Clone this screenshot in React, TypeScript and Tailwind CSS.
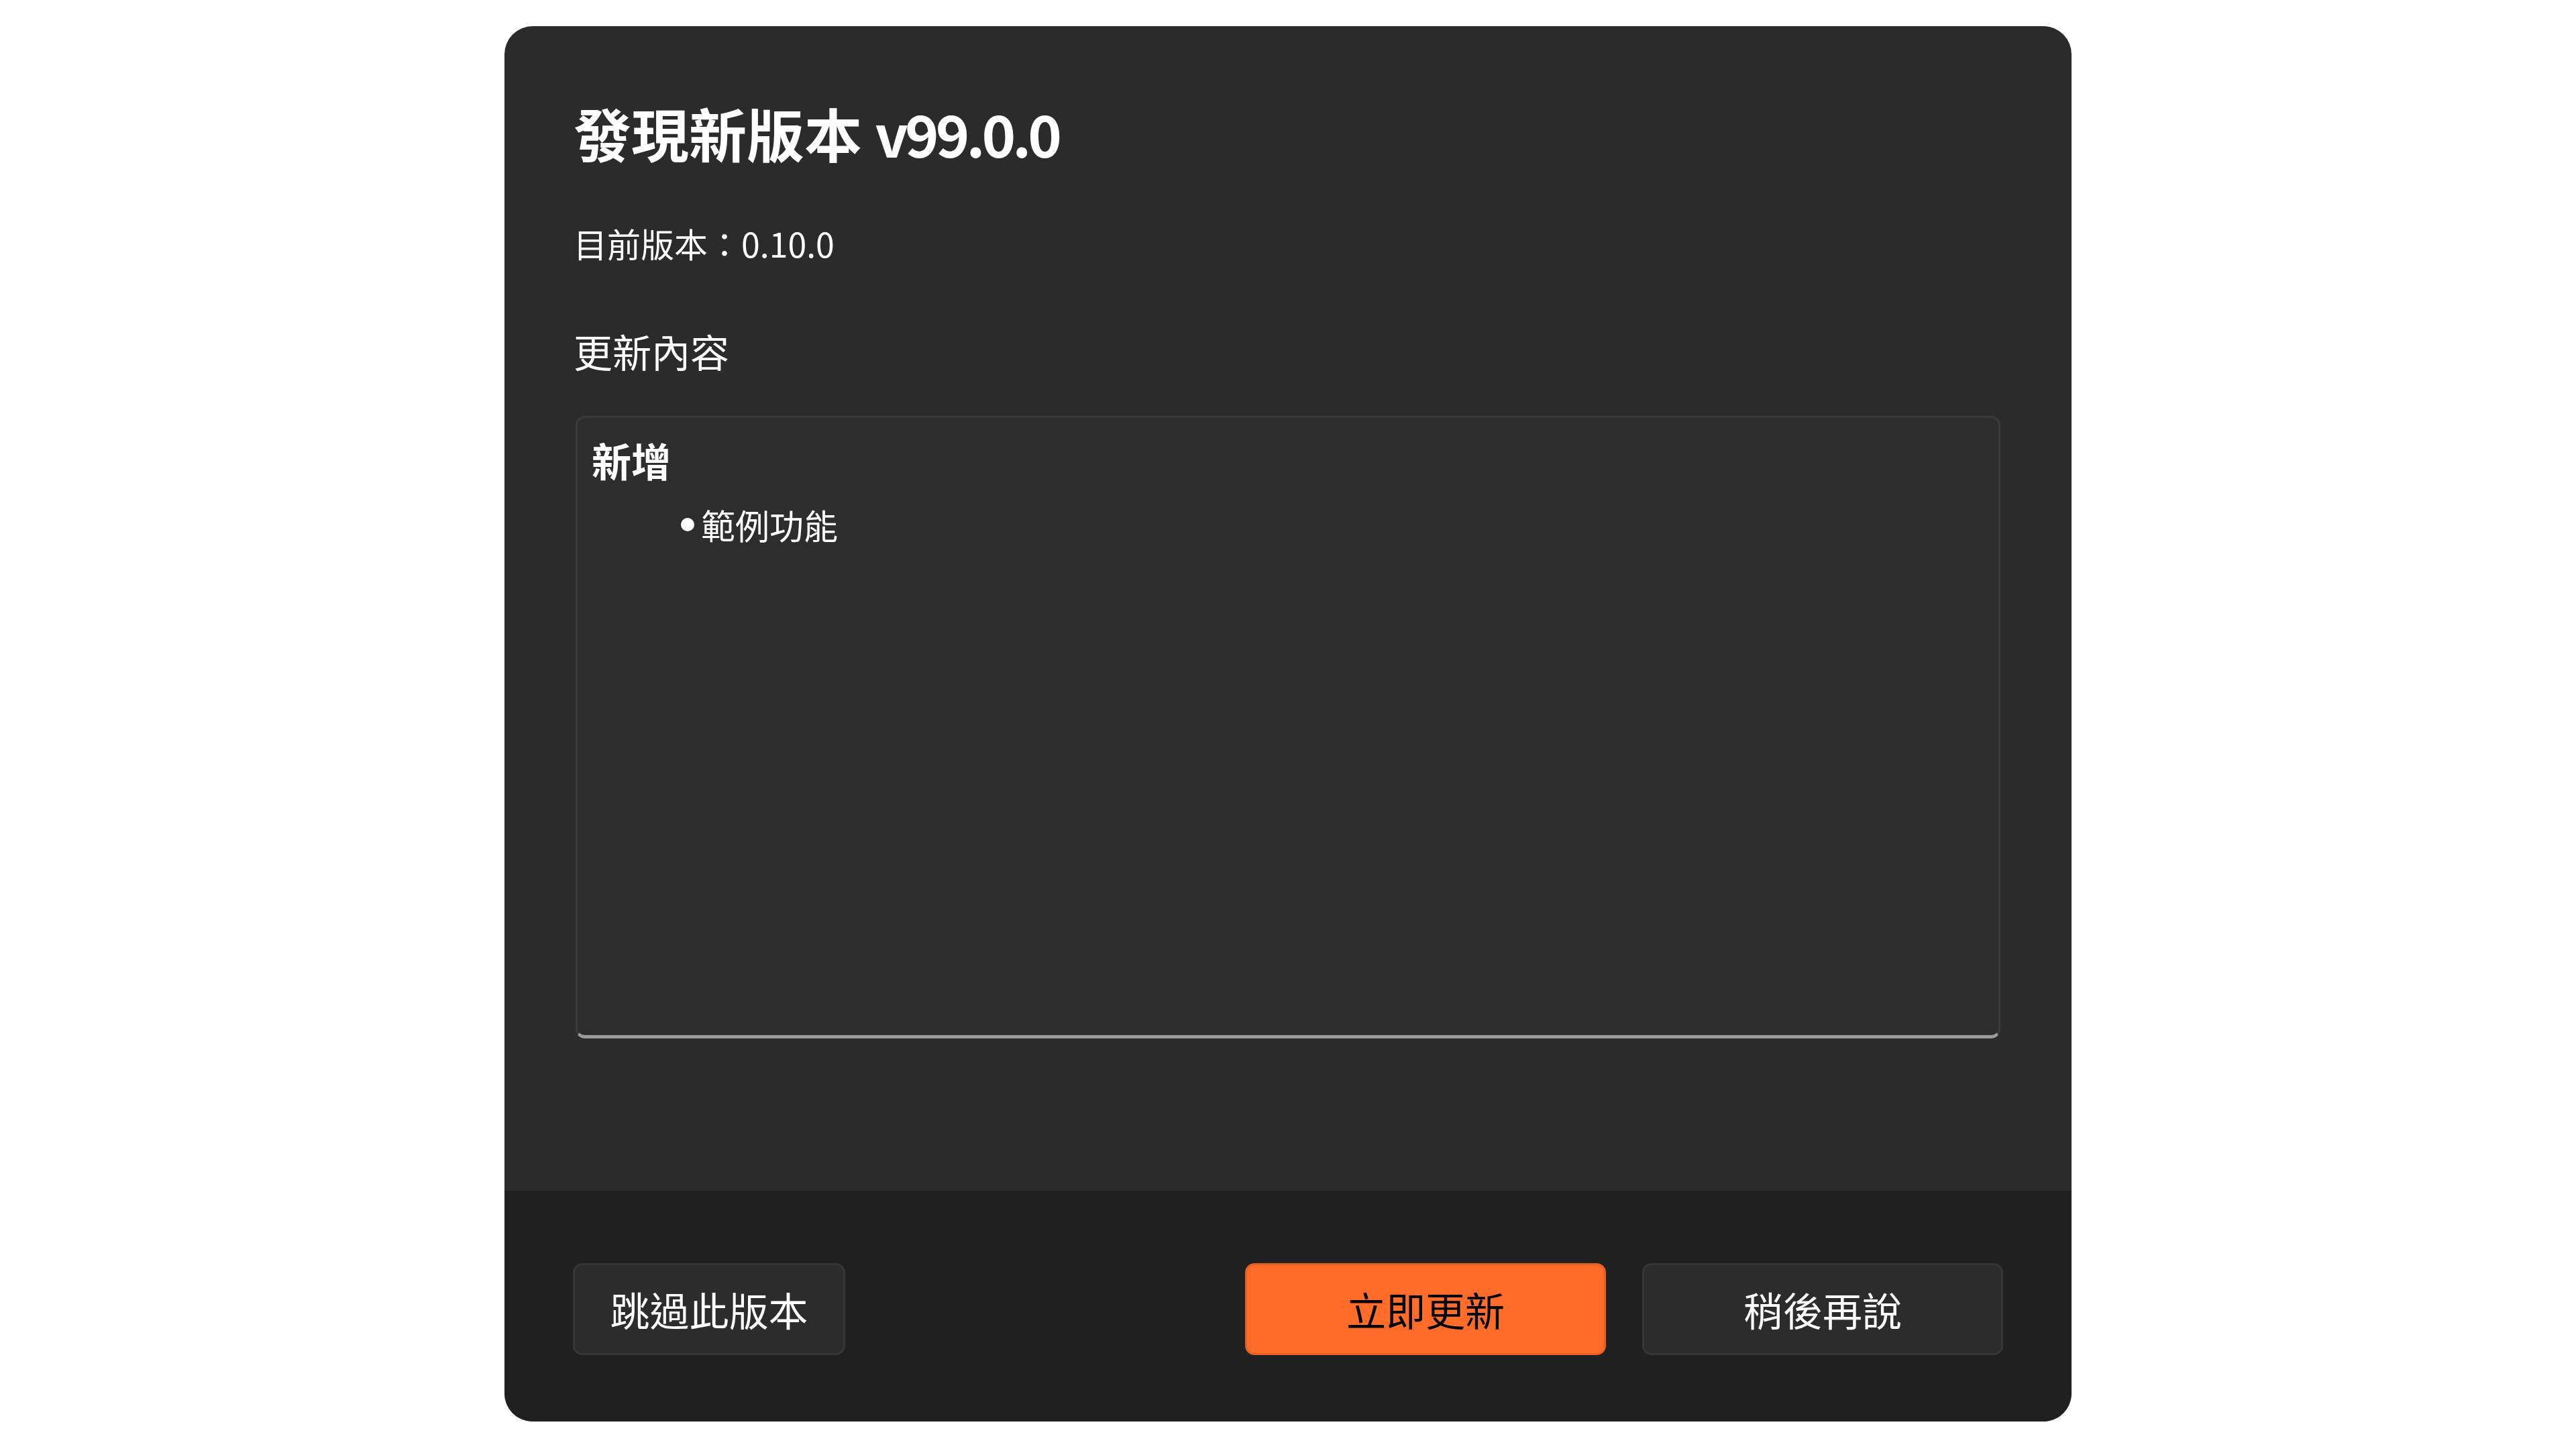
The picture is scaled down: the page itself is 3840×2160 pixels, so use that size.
import React from "react";

const changes = [{ heading: "新增", items: ["範例功能"] }];

function DialogButton({
  children,
  primary,
  className,
}: {
  children: React.ReactNode;
  primary?: boolean;
  className?: string;
}) {
  return (
    <button
      type="button"
      className={
        (primary
          ? "bg-[#ff6c29] border-[#e8601f] text-black"
          : "bg-[#2c2c2c] border-[#363636] text-white") +
        " flex h-[137px] items-center justify-center rounded-[14px] border-[3px] text-[59px] leading-none " +
        (className ?? "")
      }
    >
      {children}
    </button>
  );
}

export default function App() {
  return (
    <div
      className="flex min-h-screen justify-center bg-white pt-[39px]"
      style={{ fontFamily: '"Noto Sans CJK TC", "Noto Sans", sans-serif' }}
    >
      <div className="flex h-[2080px] w-[2336px] flex-col overflow-hidden rounded-[42px] bg-[#2b2b2b]">
        {/* contenido */}
        <div className="flex flex-1 flex-col px-[103px] pt-[109px]">
          <h1 className="text-[86px] font-bold leading-[100px] text-white">
            發現新版本 <span className="font-semibold tracking-[-5px]">v99.0.0</span>
          </h1>
          <p className="mt-[84px] text-[50px] leading-[60px] text-white">
            目前版本：0.10.0
          </p>
          <h2 className="mt-[96px] text-[58px] leading-[70px] text-white">更新內容</h2>
          <div className="mx-[3px] mt-[62px] h-[928px] rounded-[14px] border-[3px] border-b-[5px] border-[#3a3a3a] border-b-[#9a9a9a] bg-[#2d2d2d] px-[21px] pt-[28px]">
            {changes.map((c) => (
              <div key={c.heading}>
                <div className="text-[59px] font-bold leading-[70px] text-white">
                  {c.heading}
                </div>
                <ul className="mt-[31px] pl-[133px]">
                  {c.items.map((it) => (
                    <li
                      key={it}
                      className="flex items-center gap-[10px] text-[51px] leading-[60px] text-white"
                    >
                      <span className="h-[20px] w-[20px] rounded-full bg-white" />
                      {it}
                    </li>
                  ))}
                </ul>
              </div>
            ))}
          </div>
        </div>

        {/* botones */}
        <div className="flex h-[344px] items-start bg-[#202020] px-[102px] pt-[108px]">
          <DialogButton className="w-[406px]">跳過此版本</DialogButton>
          <div className="flex-1" />
          <DialogButton primary className="w-[538px]">
            立即更新
          </DialogButton>
          <DialogButton className="ml-[54px] w-[538px]">稍後再說</DialogButton>
        </div>
      </div>
    </div>
  );
}
